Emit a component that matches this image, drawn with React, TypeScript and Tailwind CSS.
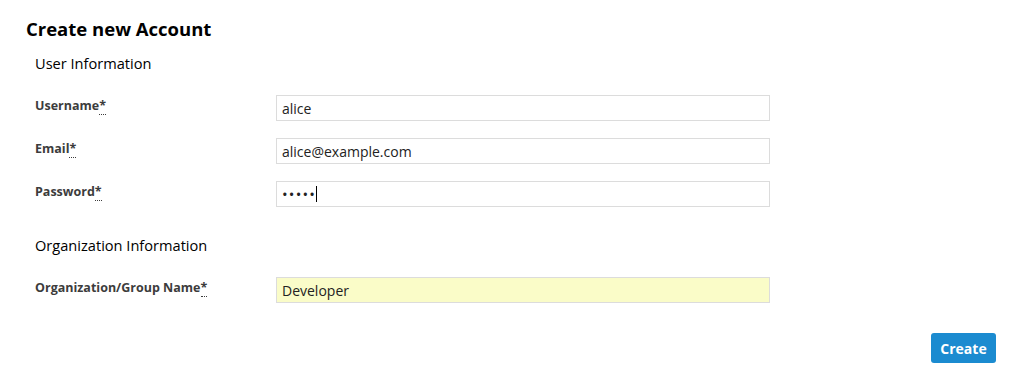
import React from 'react';

const font = { fontFamily: '"Open Sans", "Noto Sans", sans-serif' };

function Field({ label, children }: { label: string; children: React.ReactNode }) {
  return (
    <div className="flex items-start">
      <label className="w-[241px] pt-[2px] text-[12.5px] leading-[18px] font-bold text-[#3c3c3c]">
        {label}
        <abbr title="required" className="no-underline border-b border-dotted border-[#3c3c3c]">*</abbr>
      </label>
      {children}
    </div>
  );
}

function TextInput({ value, yellow }: { value: string; yellow?: boolean }) {
  return (
    <input
      readOnly
      value={value}
      className={`h-[26px] w-[494px] border border-[#dcdcdc] px-[5px] text-[14px] text-[#222] outline-none ${
        yellow ? 'bg-[#fafcc8]' : 'bg-white'
      }`}
      style={font}
    />
  );
}

export default function App() {
  return (
    <div className="w-[1024px] h-[389px] bg-white text-[#111] pt-[17px]" style={font}>
      <h1 className="pl-[26px] text-[18.5px] leading-[24px] font-bold text-black">Create new Account</h1>

      {/* User info */}
      <div className="pl-[35px]">
        <h2 className="mt-[12px] text-[14.6px] leading-[20px] text-black">User Information</h2>
        <div className="mt-[22px] flex flex-col gap-[17px]">
          <Field label="Username">
            <TextInput value="alice" />
          </Field>
          <Field label="Email">
            <TextInput value="alice@example.com" />
          </Field>
          <Field label="Password">
            <div className="h-[26px] w-[494px] border border-[#dcdcdc] bg-white px-[5px] flex items-center text-[15px] text-[#222]">
              <span className="tracking-[1.2px]">•••••</span>
              <span className="inline-block h-[16px] w-px bg-black" />
            </div>
          </Field>
        </div>

        {/* Org info */}
        <h2 className="mt-[28px] text-[14.6px] leading-[20px] text-black">Organization Information</h2>
        <div className="mt-[22px]">
          <Field label="Organization/Group Name">
            <TextInput value="Developer" yellow />
          </Field>
        </div>
      </div>

      <div className="mt-[30px] flex justify-end pr-[28px]">
        <button className="h-[30px] w-[65px] rounded-[3px] bg-[#1b8bd0] text-[14px] font-bold text-white">
          Create
        </button>
      </div>
    </div>
  );
}
